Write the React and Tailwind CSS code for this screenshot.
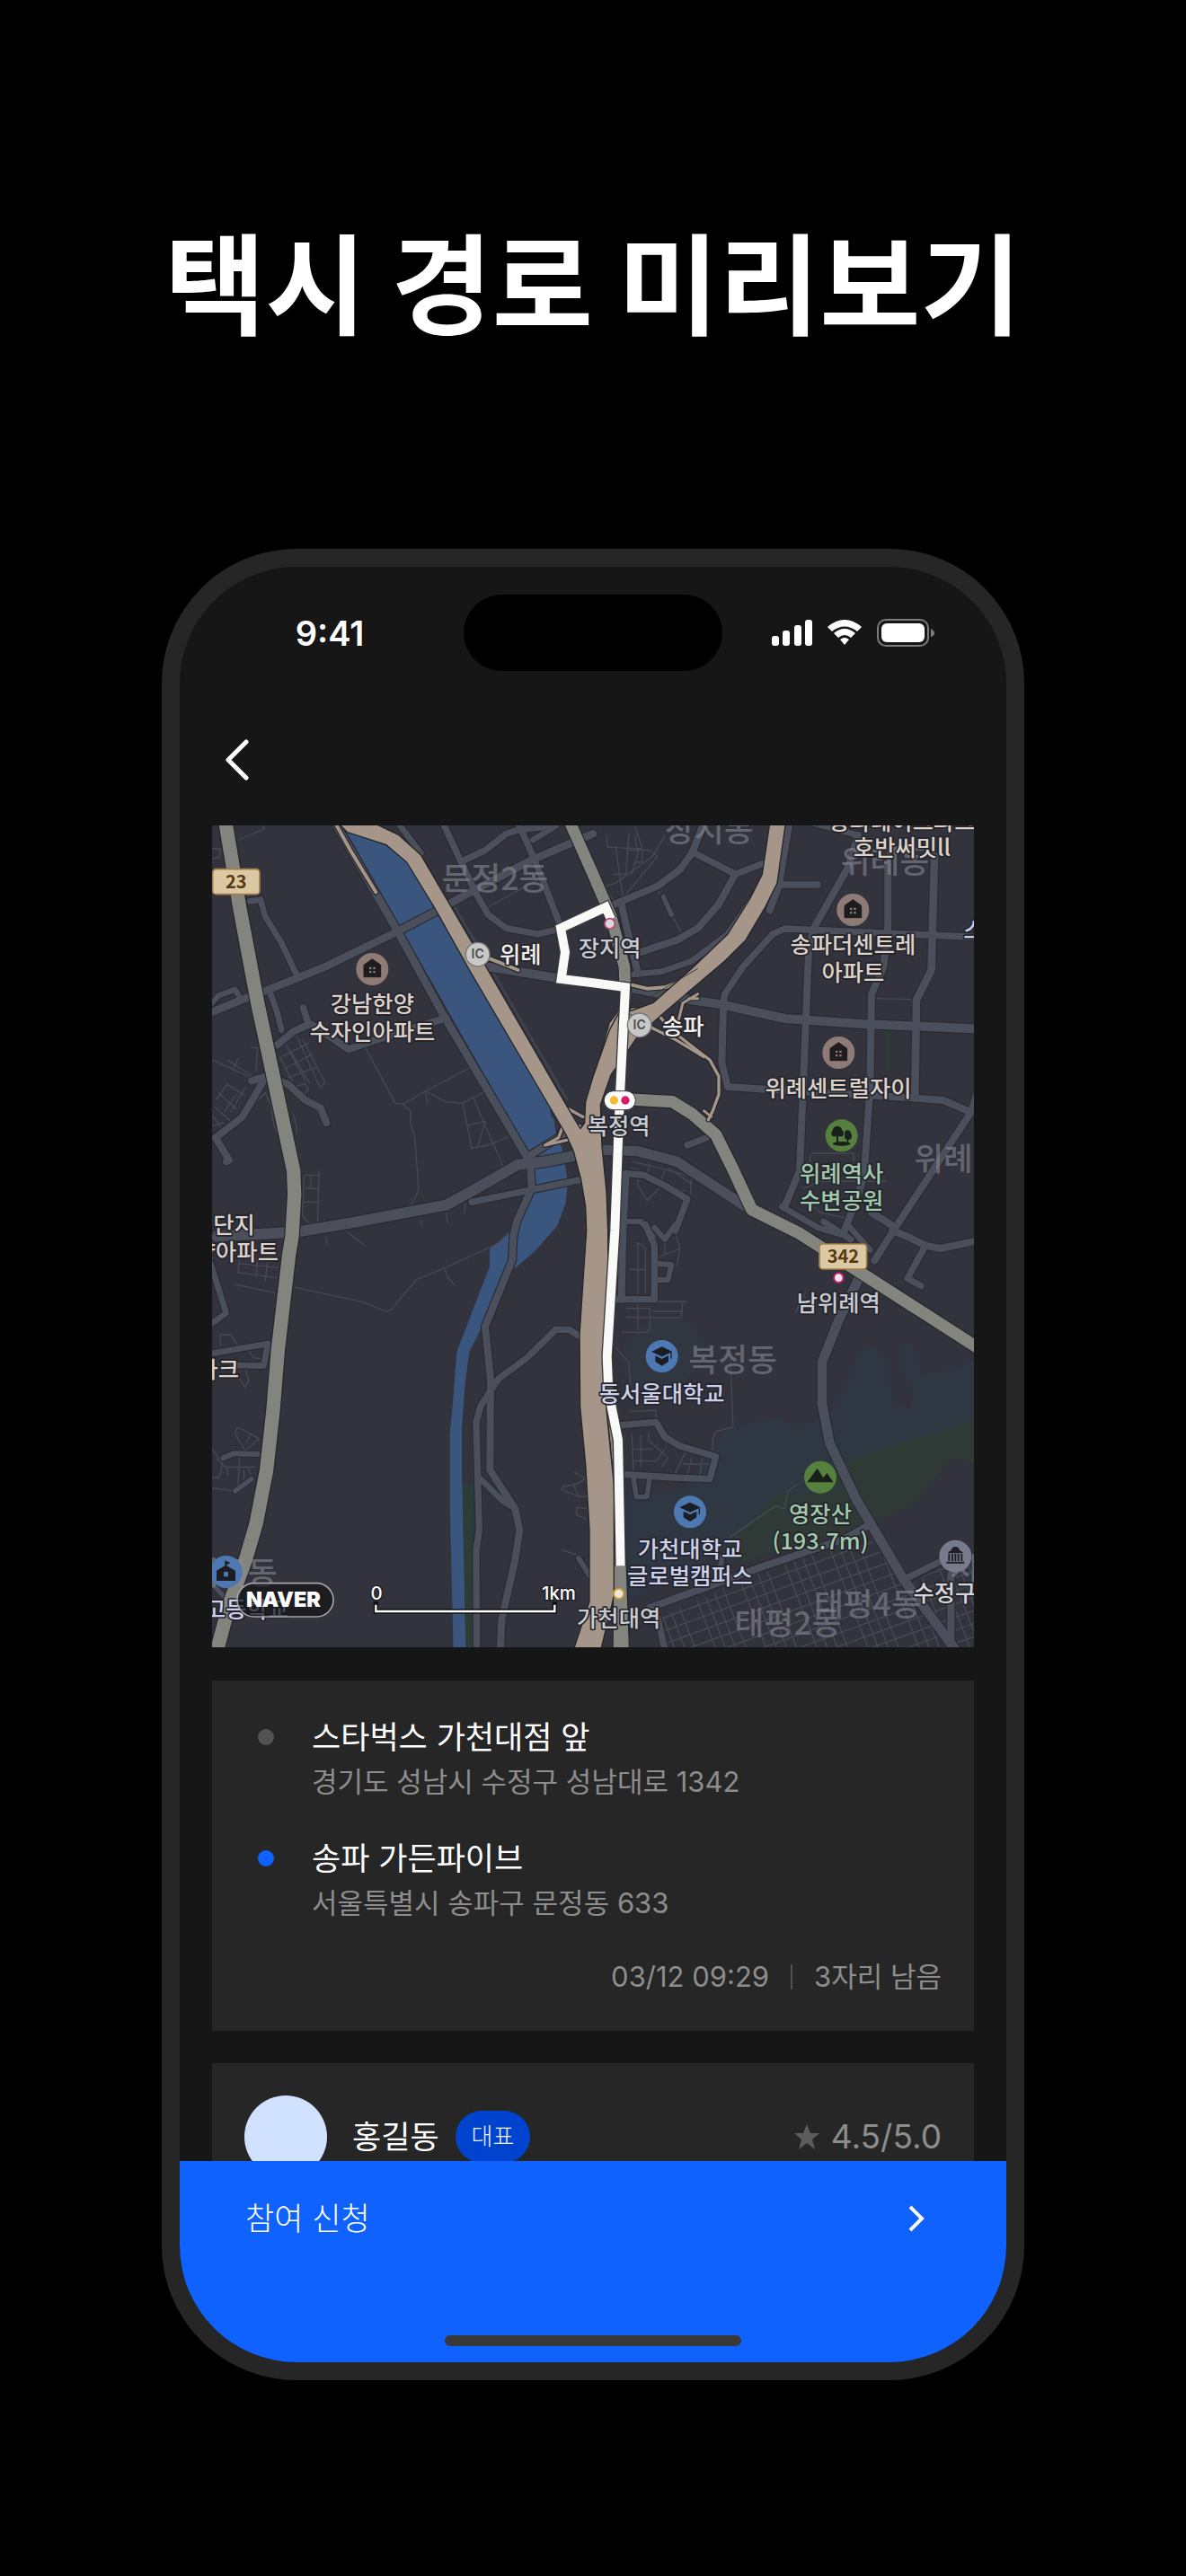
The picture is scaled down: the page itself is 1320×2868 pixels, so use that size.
import React from "react";

/* ---------- Map data: four survey tiles (A, B on top, C, D below) ---------- */

const TILE = { A: [0, 0], B: [1290, 0], C: [0, 1380], D: [1290, 1380] };
const shift = (t) => `translate(${TILE[t][0]} ${TILE[t][1]})`;

const STREETS = [
  ["A", "M530 770 L630 955 L655 958 L730 915 L880 835 M655 958 L680 980 L680 1020 L695 1070 L708 1245 L675 1310 M730 915 L738 958 M730 915 L800 950 L855 955 L930 915 M855 955 L870 1030 L885 1105 L940 1095 L1010 1065 M890 935 L930 1030 L990 1165 M870 1030 L930 1015 L905 1100 M330 1195 H375 M330 1240 H375 M322 1285 H375 M375 1180 L370 1375 M325 1195 L320 1330 L340 1355 L370 1355 M348 1195 V1240 M940 300 L1120 200 M105 75 L190 40 V28 M18 105 L45 105 L42 135 L18 138"],
  ["A", "M265 760 L330 880 M300 730 L380 905 L395 885 L320 740 M250 800 L340 755 M260 840 L355 790 M270 870 L365 835 M245 800 L290 890 M280 780 L345 890 M290 900 L330 890 L340 910 L320 930"],
  ["A", "M18 810 L150 870 M70 810 L160 870 M90 840 L105 805 M145 770 H170 L165 850 M65 890 L130 930 M40 920 L100 975 M25 965 L80 1015 M18 995 L55 1045 M30 945 L70 890 M80 985 L130 900 M18 1030 L60 1020 M60 980 L100 925 M165 950 L195 920 L215 960 L225 1030 L265 1100 M290 990 L300 1030 V1060 M865 1290 L860 1325 M800 1320 L805 1355 M715 1345 L720 1365"],
  ["B", "M945 605 L1075 608 M725 1150 V1130 L735 1122 H870 V1150 M700 1240 L760 1215 H980 M720 1290 L760 1320 L850 1340 M130 1150 L200 1165 L330 1200 M130 1170 L230 1210 M150 1190 V1230 L180 1280 L220 1240 M190 1160 L180 1195 M240 1180 L220 1230 M330 1190 L325 1260 M205 1220 L310 1250 M250 1170 L330 1225"],
  ["B", "M45 60 L50 100 L165 105 L140 30 M75 95 L100 270 M120 50 L110 190 M165 110 V150 H140 M40 230 L75 220 L200 130 L240 60 M65 190 H110 M110 110 H190 L215 130 L100 270 M40 240 L70 280 M140 60 L150 120 L130 190 M215 245 L235 270 L260 320 L295 385"],
  ["C", "M95 180 L230 208 M295 190 L520 238 L600 270 L615 265 L700 165 L795 125 L970 45 L1010 5 M795 130 L805 155 L828 185 M398 20 L402 45 M470 5 L528 50 M110 90 L105 140 L235 158 M170 95 L165 155 M205 95 L195 170 M110 110 L240 125 M45 385 V348 H80 L105 385 M140 400 L155 425 L195 430 M125 450 L140 500 L128 525 L110 495"],
  ["C", "M130 735 L95 680 L100 658 L120 665 L175 695 L130 735 M150 680 L130 710 M18 730 L60 790 M30 765 L60 770 M110 745 L105 850 M60 790 H160 M70 790 V820 M125 800 V850 M140 790 L150 830 M18 825 H45 M18 860 L90 870 M50 760 V800 L35 830 M1228 808 L1265 828 L1240 845 L1190 855 L1185 865 L1240 888 H1270 M1225 850 L1240 885 M1270 928 L1235 925 V950 L1270 965 M1185 1067 L1240 1085"],
  ["D", "M458 430 L468 655 L410 672 L400 700 V740 M75 390 L120 440 L125 520 M215 237 H315 M300 235 L295 292 M110 260 H190 V330 L180 340 H95 M150 240 V335 M110 290 L295 292 M200 270 H300 M150 40 V220 M150 40 L175 60 V210 M120 130 H175 M215 90 L290 60 L270 -10 M290 60 L280 120 M240 80 V40 M120 605 L210 600 V640 M130 680 L135 815 M160 680 V790 M185 670 V700 L250 760 L230 790 M130 730 H200 M130 770 H210 L240 730 M310 740 L270 820 M330 760 L310 830 M365 760 L355 830 M300 780 H400 M450 1030 L580 940 L610 920 L640 930 L650 870 L680 850 M675 275 L710 205"],
];

const MINOR = [
  ["A", 26, "M18 650 L140 600 L240 562 L400 497 L640 380 L770 312 L880 250 L1090 140 L1290 55"],
  ["A", 26, "M430 20 L640 385 L790 660 L1070 1135"],
  ["A", 20, "M640 20 L715 120"],
  ["A", 22, "M790 20 L850 150 L905 265 L940 325 L1000 370 L1105 390 L1170 375"],
  ["A", 22, "M850 148 L930 110 L1000 55 L1050 40 L1165 28"],
  ["A", 22, "M1040 20 L1090 130 L1130 230 L1180 360"],
  ["A", 20, "M1090 75 L1155 35"],
  ["A", 20, "M145 280 L180 275 L195 330 L250 420 L300 525"],
  ["A", 18, "M18 620 L40 595 L95 575 L110 600"],
  ["A", 20, "M210 580 L235 650 L250 710"],
  ["A", 22, "M322 635 L340 690"],
  ["A", 24, "M235 760 L290 715 L345 690 L400 725 L475 775 L560 745 L800 670"],
  ["A", 24, "M150 880 L200 865 L270 890 L330 945 L380 970 L400 1020"],
  ["A", 24, "M190 880 L120 1000 L30 1070 L75 1145 L65 1150"],
  ["A", 36, "M18 1400 L300 1385 L480 1355 L800 1295 L900 1240 L1040 1160 L1130 1150 L1230 1130"],
  ["A", 22, "M885 1285 L1080 1245 L1250 1210"],
  ["A", 24, "M1070 1135 L1190 1060"],
  ["A", 24, "M1080 1150 L1085 1240 L1035 1350 L1024 1400 L1020 1480 L930 1700 L948 1880 L946 2180 L1030 2310 L1045 2380 L1030 2480 L985 2680 L980 2790"],
  ["C", 22, "M1248 355 L1210 331 L1165 331 L1070 425 L975 495 L915 585 L900 640 L905 820 L910 1000 L900 1070 L902 1400"],
  ["C", 20, "M910 825 L990 905 L1025 925"],
  ["C", 20, "M10 100 L65 275 L18 310"],
  ["C", 20, "M10 412 L205 378 L190 452 L100 450"],
  ["C", 16, "M150 830 L95 870"],
  ["C", 18, "M55 760 L90 745 L170 747"],
  ["C", 18, "M1242 1095 L1280 1155"],
  ["C", 16, "M18 1180 L60 1225"],
  ["A", 30, "M945 500 L1160 535 L1290 555 L1420 570 L1620 610 L1720 625 L1930 672 L2190 690 L2570 706"],
  ["B", 24, "M60 295 L215 230 L290 175 L330 120 L370 20"],
  ["B", 22, "M330 115 L475 190 L565 155"],
  ["B", 24, "M475 190 L420 290 L350 370 L280 410 L160 450"],
  ["B", 24, "M95 290 L120 400 L150 520"],
  ["B", 20, "M130 525 L230 515 L330 480 L450 390 L540 260"],
  ["B", 16, "M235 265 L262 325"],
  ["B", 24, "M655 20 L620 230 L590 310"],
  ["B", 22, "M630 225 H750"],
  ["B", 24, "M885 60 L850 170 L740 365 L720 440 L710 700 L690 1180 L640 1300"],
  ["B", 20, "M740 20 L885 60"],
  ["B", 22, "M435 620 L440 590 L500 500 L600 390 L640 372 L1280 400"],
  ["B", 24, "M985 150 V360 L970 500 L930 590 L925 900 L905 1200 L870 1300 L840 1380"],
  ["B", 26, "M1140 130 L1130 510 L1080 610 L1075 930"],
  ["B", 24, "M435 640 L430 820 L450 900 L600 910 L1080 938 L1170 945 L1262 985"],
  ["B", 24, "M1280 930 L1262 985 L1010 1370 L940 1480"],
  ["B", 22, "M315 1095 L380 1070"],
  ["B", 20, "M630 1300 L750 1370 L850 1400"],
  ["B", 24, "M930 1320 L1010 1370"],
  ["B", 34, "M0 1110 L150 1115 L280 1150 L510 1300"],
  ["B", 22, "M110 1190 L170 1195 L240 1230 L315 1275 L275 1380"],
  ["B", 24, "M110 1190 L100 1380 L95 1610"],
  ["B", 18, "M110 1350 H160 L200 1400"],
  ["D", 22, "M75 230 H200"],
  ["D", 22, "M175 -20 L205 50 V230"],
  ["D", 18, "M205 -10 L240 30 L275 -20"],
  ["D", 18, "M210 165 H250 L262 115 L210 110"],
  ["D", 22, "M95 650 L210 640 L240 690 L290 720 L410 755 L390 830 L270 825 L110 815"],
  ["D", 16, "M135 825 L145 890 H180 L190 820"],
  ["D", 32, "M890 155 L820 300 L765 440 V580 L790 710 L880 900 L1040 1170 L1210 1400"],
  ["D", 24, "M1000 0 L1050 20 L1110 50 L1160 60 L1280 35"],
  ["D", 22, "M1110 50 L1050 160 L1095 185"],
  ["D", 20, "M850 -20 L925 65"],
  ["D", 22, "M770 -30 L860 30"],
  ["D", 24, "M910 990 L840 1030 L545 1130 L190 1260"],
  ["D", 22, "M1040 1165 L1160 1105"],
  ["D", 24, "M1195 1150 V1400"],
  ["D", 22, "M215 1290 L240 1400"],
  ["D", 18, "M430 1090 L425 1130"],
];

const GREY = [
  ["A", 46, "M62 10 L110 300 L170 620 L290 1180 L293 1260 L285 1400 L275 1460 L238 1780 L222 1980 L200 2180 L165 2360 L130 2480 L75 2630 L30 2800"],
  ["A", 38, "M1210 10 L1290 190 L1350 330 L1395 500 L1398 600"],
  ["B", 40, "M90 940 L265 950 L330 990 L410 1060 L460 1160 L530 1310 L690 1390 L1290 1775"],
];

const RAMPS = [
  ["A", 12, "M430 20 L480 110 L565 250"],
  ["A", 12, "M940 470 L1040 510"],
  ["A", 10, "M1210 975 L1255 1000 L1290 1000"],
  ["A", 10, "M1190 1030 L1175 1070 L1130 1095 L1215 1075"],
  ["A", 10, "M1245 1030 L1262 1100"],
  ["B", 12, "M130 560 L180 572 L240 568 L300 545"],
  ["B", 9, "M350 590 L300 620 L285 680"],
  ["B", 9, "M320 605 H350"],
  ["B", 10, "M210 650 L260 710 L350 780 L390 810 L420 865 V925 L400 980 L385 1010"],
  ["B", 10, "M190 700 L280 745 L370 800"],
  ["B", 8, "M370 980 L395 1000"],
  ["B", 9, "M90 650 L60 690 L30 800"],
  ["B", 9, "M88 690 L65 740 L30 830"],
  ["B", 9, "M130 642 L190 640"],
];

const EXPRESSWAY =
  "M440 20 L470 50 L600 92 L668 150 L760 300 L880 515 L1150 975 L1200 1060 L1225 1115 L1250 1210 L1265 1300 L1268 1380 L1245 1730 L1247 1970 L1265 2160 L1278 2380 V2620 L1222 2790 H1314 L1360 2600 V2230 L1335 1980 L1322 1800 L1340 1630 V1380 L1335 1250 L1320 1100 L1315 960 L1350 860 L1400 790 L1440 730 L1530 650 L1730 480 L1800 410 L1865 300 L1905 220 L1933 20 H1880 L1855 190 L1815 270 L1740 390 L1620 505 L1490 620 L1420 645 L1375 655 L1345 710 L1292 860 L1265 950 L1262 1020 L1248 1040 L1215 985 L890 425 L715 125 L640 58 L560 20 Z";

const TRUNK_ROAD = "M1333 1950 L1380 2080 L1402 2500 L1412 2790 H1356 L1360 2230 Z";

const WATER =
  "M465 45 L600 95 L668 150 L775 330 L1145 965 L1150 995 L1160 1010 L1168 1070 L1185 1100 L1198 1165 L1206 1220 L1198 1290 L1170 1365 L1100 1445 L1030 1505 L1000 1510 L925 1690 L877 1785 L862 1900 L852 2040 V2180 L865 2790 H824 L812 2280 V2060 L820 1980 L835 1785 L945 1500 V1440 L1010 1390 L1040 1330 L1085 1250 L1075 1120 Z";

const ROUTE =
  "M1350 340 L1332 300 L1182 370 L1197 450 L1184 540 L1290 553 L1398 567 L1380 930 L1374 1080 L1363 1380 L1337 1800 L1342 1920 L1374 2080 L1382 2500";

const DISTRICTS = [
  ["A", 963, 243, "문정2동"],
  ["B", 388, 80, "장지동"],
  ["B", 975, 187, "위례동"],
  ["B", 1170, 1180, "위례"],
  ["D", 467, 470, "복정동"],
  ["D", 916, 1288, "태평4동"],
  ["D", 651, 1350, "태평2동"],
  ["D", 1240, 1170, "시"],
  ["C", 88, 1183, "세곡동"],
];

const APT = "#ddd1c9";
const EDU = "#ccd0ea";
const PARK = "#a3c9ad";
const STATION = "#c9cbd2";
const PLACES = [
  ["A", 553, 652, APT, "강남한양"],
  ["A", 553, 744, APT, "수자인아파트"],
  ["A", 70, 1388, APT, "1단지"],
  ["C", 100, 98, APT, "양아파트"],
  ["C", 38, 492, APT, "파크"],
  ["C", 134, 1293, EDU, "고등학교"],
  ["A", 1048, 487, "#f4f1ec", "위례"],
  ["B", 301, 727, "#f4f1ec", "송파"],
  ["B", 1032, 42, APT, "송파레이크파크"],
  ["B", 1032, 130, APT, "호반써밋ll"],
  ["B", 868, 453, APT, "송파더센트레"],
  ["B", 868, 545, APT, "아파트"],
  ["B", 819, 932, APT, "위례센트럴자이"],
  ["B", 830, 1217, PARK, "위례역사"],
  ["B", 830, 1308, PARK, "수변공원"],
  ["B", 1272, 405, EDU, "스"],
  ["B", 56, 466, STATION, "장지역"],
  ["B", 86, 1060, STATION, "복정역"],
  ["D", 820, 271, STATION, "남위례역"],
  ["D", 86, 1323, STATION, "가천대역"],
  ["D", 230, 573, EDU, "동서울대학교"],
  ["D", 324, 1091, EDU, "가천대학교"],
  ["D", 324, 1183, EDU, "글로벌캠퍼스"],
  ["D", 759, 976, PARK, "영장산"],
  ["D", 759, 1065, PARK, "(193.7m)"],
  ["D", 1174, 1240, "#d5d6da", "수정구"],
];

function Roads({ data, fill, edge }) {
  return (
    <g fill="none" strokeLinejoin="round" strokeLinecap="round">
      {data.map(([t, w, d], i) => (
        <path key={"e" + i} transform={shift(t)} d={d} stroke={edge} strokeWidth={w + 7} />
      ))}
      {data.map(([t, w, d], i) => (
        <path key={"f" + i} transform={shift(t)} d={d} stroke={fill} strokeWidth={w} />
      ))}
    </g>
  );
}

function CityGrid() {
  const lines = [];
  for (let i = 0; i < 15; i++) {
    const y = 1200 + i * 44;
    lines.push(<path key={"r" + i} d={`M180 ${y + 70} L1280 ${y - 330}`} />);
  }
  for (let i = 0; i < 34; i++) {
    const x = 120 + i * 34;
    if (i % 5 === 3) continue;
    lines.push(<path key={"c" + i} d={`M${x} 1000 L${x + 155} 1400`} />);
  }
  return (
    <g transform={shift("D")} clipPath="url(#old-town)" stroke="#484a54" strokeWidth="4">
      {lines}
    </g>
  );
}

function Poi({ t, x, y, fill, children }) {
  return (
    <g transform={shift(t)}>
      <g transform={`translate(${x} ${y})`}>
        <circle r="54" fill={fill} />
        {children}
      </g>
    </g>
  );
}

function House({ bg }) {
  return (
    <>
      <path d="M0 -34 L28 -14 V26 H-28 V-14 Z" fill="#1e1c1e" stroke="#1e1c1e" strokeWidth="3" strokeLinejoin="round" />
      <path d="M-10 -7 h7 v7 h-7z M3 -7 h7 v7 h-7z M-10 6 h7 v7 h-7z M3 6 h7 v7 h-7z" fill={bg} />
    </>
  );
}

function Cap() {
  return (
    <>
      <path d="M0 -32 L35 -15 L0 1 L-35 -15 Z" fill="#1c1d22" />
      <path d="M-22 -2 L0 9 L22 -2 V18 L0 32 L-22 18 Z" fill="#1c1d22" />
      <path d="M31 -14 V8" stroke="#1c1d22" strokeWidth="4" />
    </>
  );
}

function Interchange({ t, x, y }) {
  return (
    <g transform={shift(t)}>
      <circle cx={x} cy={y} r="40" fill="#c8c8c9" stroke="#77777a" strokeWidth="4" />
      <text x={x} y={y + 14} textAnchor="middle" fontSize="42" fontWeight="600" fill="#4b4b4d" className="font-['Inter',sans-serif]">
        IC
      </text>
    </g>
  );
}

function RoadSign({ t, x, y, w, children }) {
  return (
    <g transform={shift(t)}>
      <rect x={x} y={y} width={w} height="84" rx="12" fill="#dcc9a4" stroke="#a37c4a" strokeWidth="5" />
      <text x={x + w / 2} y={y + 64} textAnchor="middle" fontSize="60" fontWeight="700" fill="#573812">
        {children}
      </text>
    </g>
  );
}

function RouteMap() {
  return (
    <svg
      viewBox="18 27 2544 2746"
      role="img"
      aria-label="택시 경로 지도"
      className="block h-auto w-full bg-[#32333c] font-['Noto_Sans_CJK_KR',sans-serif]"
    >
      <defs>
        <clipPath id="old-town">
          <path d="M225 1290 L545 1150 L915 1010 L1030 1180 L1190 1400 H250 Z M1060 1180 L1160 1125 L1280 1090 V1400 H1215 Z" />
        </clipPath>
      </defs>

      <g transform={shift("D")}>
        <circle cx="250" cy="400" r="115" fill="#303741" />
        <path d="M90 420 L150 330 L200 480 L130 560 Z" fill="#303741" />
        <path
          d="M110 880 L300 870 L400 720 L440 660 L620 620 L680 665 L800 600 L850 500 L890 400 L930 385 L980 420 L1000 570 L1060 600 L1070 540 L1020 440 L1030 370 L1065 375 L1100 480 L1200 465 L1280 425 V700 L800 840 L450 1050 L300 1150 L120 1230 Z"
          fill="#2f3742"
        />
        <path
          d="M430 1060 L480 1020 L620 880 L720 880 L850 770 L1060 700 L1280 630 V780 L1200 760 L1110 860 L1080 910 L950 970 L900 990 L500 1110 Z"
          fill="#2f3a37"
        />
      </g>
      <path d="M850 2230 H890 V2790 H860 Z" fill="#2c3c38" />
      <path d="M2265 715 H2285 V840 H2267 Z" fill="#2c3a34" />

      <path d={WATER} fill="#3a567e" />
      <g fill="none" stroke="#474953" strokeWidth="4" strokeLinejoin="round">
        {STREETS.map(([t, d], i) => (
          <path key={i} transform={shift(t)} d={d} />
        ))}
      </g>
      <CityGrid />
      <path d="M820 285 L1205 945" stroke="#3f434f" strokeWidth="8" />
      <Roads data={MINOR} fill="#4b4f5b" edge="#292b33" />
      <Roads data={GREY} fill="#84847e" edge="#25262b" />
      <Roads data={RAMPS} fill="#a59689" edge="#25262b" />
      <path d={TRUNK_ROAD} fill="#84847e" stroke="#25262b" strokeWidth="4" />
      <path d={EXPRESSWAY} fill="#a59689" stroke="#25262b" strokeWidth="4" strokeLinejoin="round" />
      <path d="M1408 655 L1470 690 M1480 600 L1640 505" stroke="#3a3634" strokeWidth="3" />
      <path d={ROUTE} fill="none" stroke="#3b3b3e" strokeWidth="38" strokeLinejoin="miter" />
      <path d={ROUTE} fill="none" stroke="#f9f9f7" strokeWidth="30" strokeLinejoin="miter" />

      <g fill="#8b8e98" fillOpacity="0.56" fontSize="107" fontWeight="500" textAnchor="middle">
        {DISTRICTS.map(([t, x, y, label]) => (
          <text key={label} transform={shift(t)} x={x} y={y}>
            {label}
          </text>
        ))}
      </g>

      <Poi t="A" x={553} y={507} fill="#8f7b75"><House bg="#8f7b75" /></Poi>
      <Poi t="B" x={868} y={309} fill="#8f7b75"><House bg="#8f7b75" /></Poi>
      <Poi t="B" x={820} y={786} fill="#8f7b75"><House bg="#8f7b75" /></Poi>
      <Poi t="B" x={830} y={1063} fill="#55803e">
        <g fill="#1b1f1b">
          <circle cx="-14" cy="-16" r="16" />
          <circle cx="-23" cy="-8" r="11" />
          <circle cx="-4" cy="-8" r="11" />
          <path d="M-17 0 h6 v24 h-6z M18 4 h5 v20 h-5z" />
          <circle cx="20" cy="-8" r="10" />
          <circle cx="22" cy="2" r="12" />
          <ellipse cx="0" cy="27" rx="30" ry="7" />
        </g>
      </Poi>
      <Poi t="D" x={230} y={420} fill="#4d78b2"><Cap /></Poi>
      <Poi t="D" x={324} y={940} fill="#4d78b2"><Cap /></Poi>
      <Poi t="D" x={759} y={824} fill="#55803e">
        <path d="M-44 17 L-10 -30 L10 2 L22 -14 L44 17 Z" fill="#1b1f1b" />
      </Poi>
      <Poi t="C" x={65} y={1140} fill="#4d78b2">
        <path d="M-32 -4 L-4 -20 V-38 L14 -30 L2 -24 V-20 L31 -4 V30 H-32 Z" fill="#1c1d22" />
        <path d="M-8 0 h15 v16 h-15z" fill="#4d78b2" />
      </Poi>
      <Poi t="D" x={1210} y={1088} fill="#777b8c">
        <path d="M-26 -10 Q-22 -18 -14 -20 Q-12 -32 0 -32 Q12 -32 14 -20 Q22 -18 26 -10 Z M-24 -8 h6 v24 h-6z M-13 -8 h6 v24 h-6z M-3 -8 h6 v24 h-6z M7 -8 h6 v24 h-6z M18 -8 h6 v24 h-6z M-30 18 H30 V24 H-30 Z" fill="#202127" />
      </Poi>

      <Interchange t="A" x={905} y={458} />
      <Interchange t="B" x={155} y={694} />

      <circle cx="1346" cy="355" r="17" fill="#d8d8da" stroke="#c2457c" strokeWidth="5" />
      <circle cx="2110" cy="1538" r="16" fill="#efe6ec" stroke="#b81f68" strokeWidth="6" />
      <circle cx="1376" cy="2593" r="17" fill="#ebe8e0" stroke="#c99a35" strokeWidth="6" />
      <rect x="1327" y="914" width="105" height="63" rx="31" fill="#fdfdfd" stroke="#3b3b3e" strokeWidth="3" />
      <circle cx="1360" cy="945" r="14" fill="#f7b92e" />
      <circle cx="1398" cy="945" r="14" fill="#d61b6b" />

      <RoadSign t="A" x={20} y={173} w={157}>23</RoadSign>
      <RoadSign t="D" x={756} y={45} w={158}>342</RoadSign>

      <g fontSize="76" fontWeight="500" textAnchor="middle" stroke="#24252b" strokeWidth="10" strokeLinejoin="round" paintOrder="stroke">
        {PLACES.map(([t, x, y, color, label]) => (
          <text key={label + x + y} transform={shift(t)} x={x} y={y} fill={color}>
            {label}
          </text>
        ))}
      </g>

      <g transform={shift("C")}>
        <rect x="102" y="1178" width="321" height="112" rx="56" fill="#141518" fillOpacity="0.72" stroke="#a4a5a8" strokeWidth="5" />
        <text x="256" y="1258" textAnchor="middle" fontSize="70" fontWeight="900" fill="#ffffff" className="font-['Inter',sans-serif]">
          NAVER
        </text>
        <path d="M565 1248 V1272 H1162 V1248" fill="none" stroke="#101114" strokeWidth="16" strokeLinecap="square" />
        <path d="M565 1250 V1272 H1162 V1250" fill="none" stroke="#ffffff" strokeWidth="7" />
        <g fontSize="61" fontWeight="500" fill="#ffffff" textAnchor="middle" stroke="#1c1d22" strokeWidth="8" paintOrder="stroke" className="font-['Inter',sans-serif]">
          <text x="567" y="1233">0</text>
          <text x="1176" y="1233">1km</text>
        </g>
      </g>
    </svg>
  );
}

/* ------------------------------- Phone UI ------------------------------- */

function StatusBar() {
  return (
    <div className="grid grid-cols-[1fr_288px_1fr] items-center pt-[31px]">
      <p className="pl-[18px] text-center text-[38px] leading-none font-semibold">9:41</p>
      <div className="h-[85px] rounded-full bg-black" />
      <div className="flex justify-center pr-6">
        <svg width="182" height="32" viewBox="0 0 182 32" fill="#fff" aria-label="상태 표시">
          <rect x="0" y="19" width="8" height="11" rx="3" />
          <rect x="12" y="13" width="8" height="17" rx="3" />
          <rect x="25" y="7" width="8" height="23" rx="3" />
          <rect x="37" y="1" width="8" height="29" rx="3" />
          <path d="M62 9 Q81 -7 100 9 L95 14 Q81 3 67 14 Z" />
          <path d="M69 16 Q81 6 93 16 L88 21 Q81 15 74 21 Z" />
          <path d="M76 23 Q81 19 86 23 L81 29 Z" />
          <rect x="118" y="1" width="56" height="29" rx="9" fill="none" stroke="#7b7b7b" strokeWidth="2" />
          <rect x="122" y="5" width="48" height="21" rx="6" />
          <path d="M177 11 Q181 13 181 16 Q181 19 177 20 Z" fill="#7b7b7b" />
        </svg>
      </div>
    </div>
  );
}

function Stop({ dot, name, address }) {
  return (
    <li className="grid grid-cols-[75px_1fr]">
      <span className="flex h-[54px] items-center pl-[15px]">
        <span className={`size-[18px] rounded-full ${dot}`} />
      </span>
      <div>
        <p className="text-[35px] leading-[54px] text-white">{name}</p>
        <p className="text-[31px] leading-[45px] text-[#8d8d8d]">{address}</p>
      </div>
    </li>
  );
}

export default function App() {
  return (
    <div className="flex min-h-screen flex-col items-center bg-black font-['Inter','Noto_Sans_CJK_KR',sans-serif] text-white">
      <h1 className="pt-[226px] text-center font-['Noto_Sans_CJK_KR',sans-serif] text-[122px] leading-[168px] font-bold">
        택시 경로 미리보기
      </h1>

      <main className="mt-[217px] mb-[217px] w-full max-w-[960px] overflow-hidden rounded-[150px] border-[20px] border-[#262626] bg-[#161616]">
        <StatusBar />

        <div className="flex flex-col px-9">
          <header className="pt-[72px] pb-[46px]">
            <button type="button" aria-label="뒤로" className="block">
              <svg width="54" height="54" viewBox="0 0 54 54" fill="none" stroke="#fff" strokeWidth="5" strokeLinecap="round" strokeLinejoin="round">
                <path d="M38 7 L18 27 L38 47" />
              </svg>
            </button>
          </header>

          <RouteMap />

          <section className="mt-[37px] bg-[#262626] p-9">
            <ul className="flex flex-col gap-9">
              <Stop dot="bg-[#525252]" name="스타벅스 가천대점 앞" address="경기도 성남시 수정구 성남대로 1342" />
              <Stop dot="bg-[#0f62fe]" name="송파 가든파이브" address="서울특별시 송파구 문정동 633" />
            </ul>
            <div className="mt-9 flex items-center justify-end gap-6 text-[31px] leading-[48px] text-[#8d8d8d]">
              <span>03/12 09:29</span>
              <span className="h-7 w-0.5 bg-[#525252]" />
              <span>3자리 남음</span>
            </div>
          </section>

          <section className="mt-9 flex items-center bg-[#262626] p-9">
            <div className="size-[92px] rounded-full bg-[#d0e2ff]" />
            <p className="ml-7 text-[35px] leading-[54px]">홍길동</p>
            <span className="ml-[18px] rounded-full bg-[#0043ce] px-[18px] text-[26px] leading-[58px] font-light text-[#edf5ff]">대표</span>
            <svg width="30" height="30" viewBox="0 0 30 30" className="ml-auto" fill="#5c5c5c" aria-hidden="true">
              <path d="M15 1 L19 11 L29 11 L21 18 L24 29 L15 22 L6 29 L9 18 L1 11 L11 11 Z" />
            </svg>
            <p className="ml-3 text-[37px] leading-[54px] text-[#8d8d8d]">4.5/5.0</p>
          </section>
        </div>

        <footer className="relative z-10 -mt-[55px] bg-[#0f62fe] pb-[18px]">
          <button type="button" className="flex w-full items-center justify-between pt-[37px] pr-[80px] pb-9 pl-[73px] text-[35px] leading-[54px] font-light">
            참여 신청
            <svg width="40" height="40" viewBox="0 0 40 40" fill="none" stroke="#fff" strokeWidth="4">
              <path d="M13 7 L26 20 L13 33" />
            </svg>
          </button>
          <div className="mx-auto mt-[67px] h-3 w-[330px] rounded-full bg-[#393939]" />
        </footer>
      </main>
    </div>
  );
}
